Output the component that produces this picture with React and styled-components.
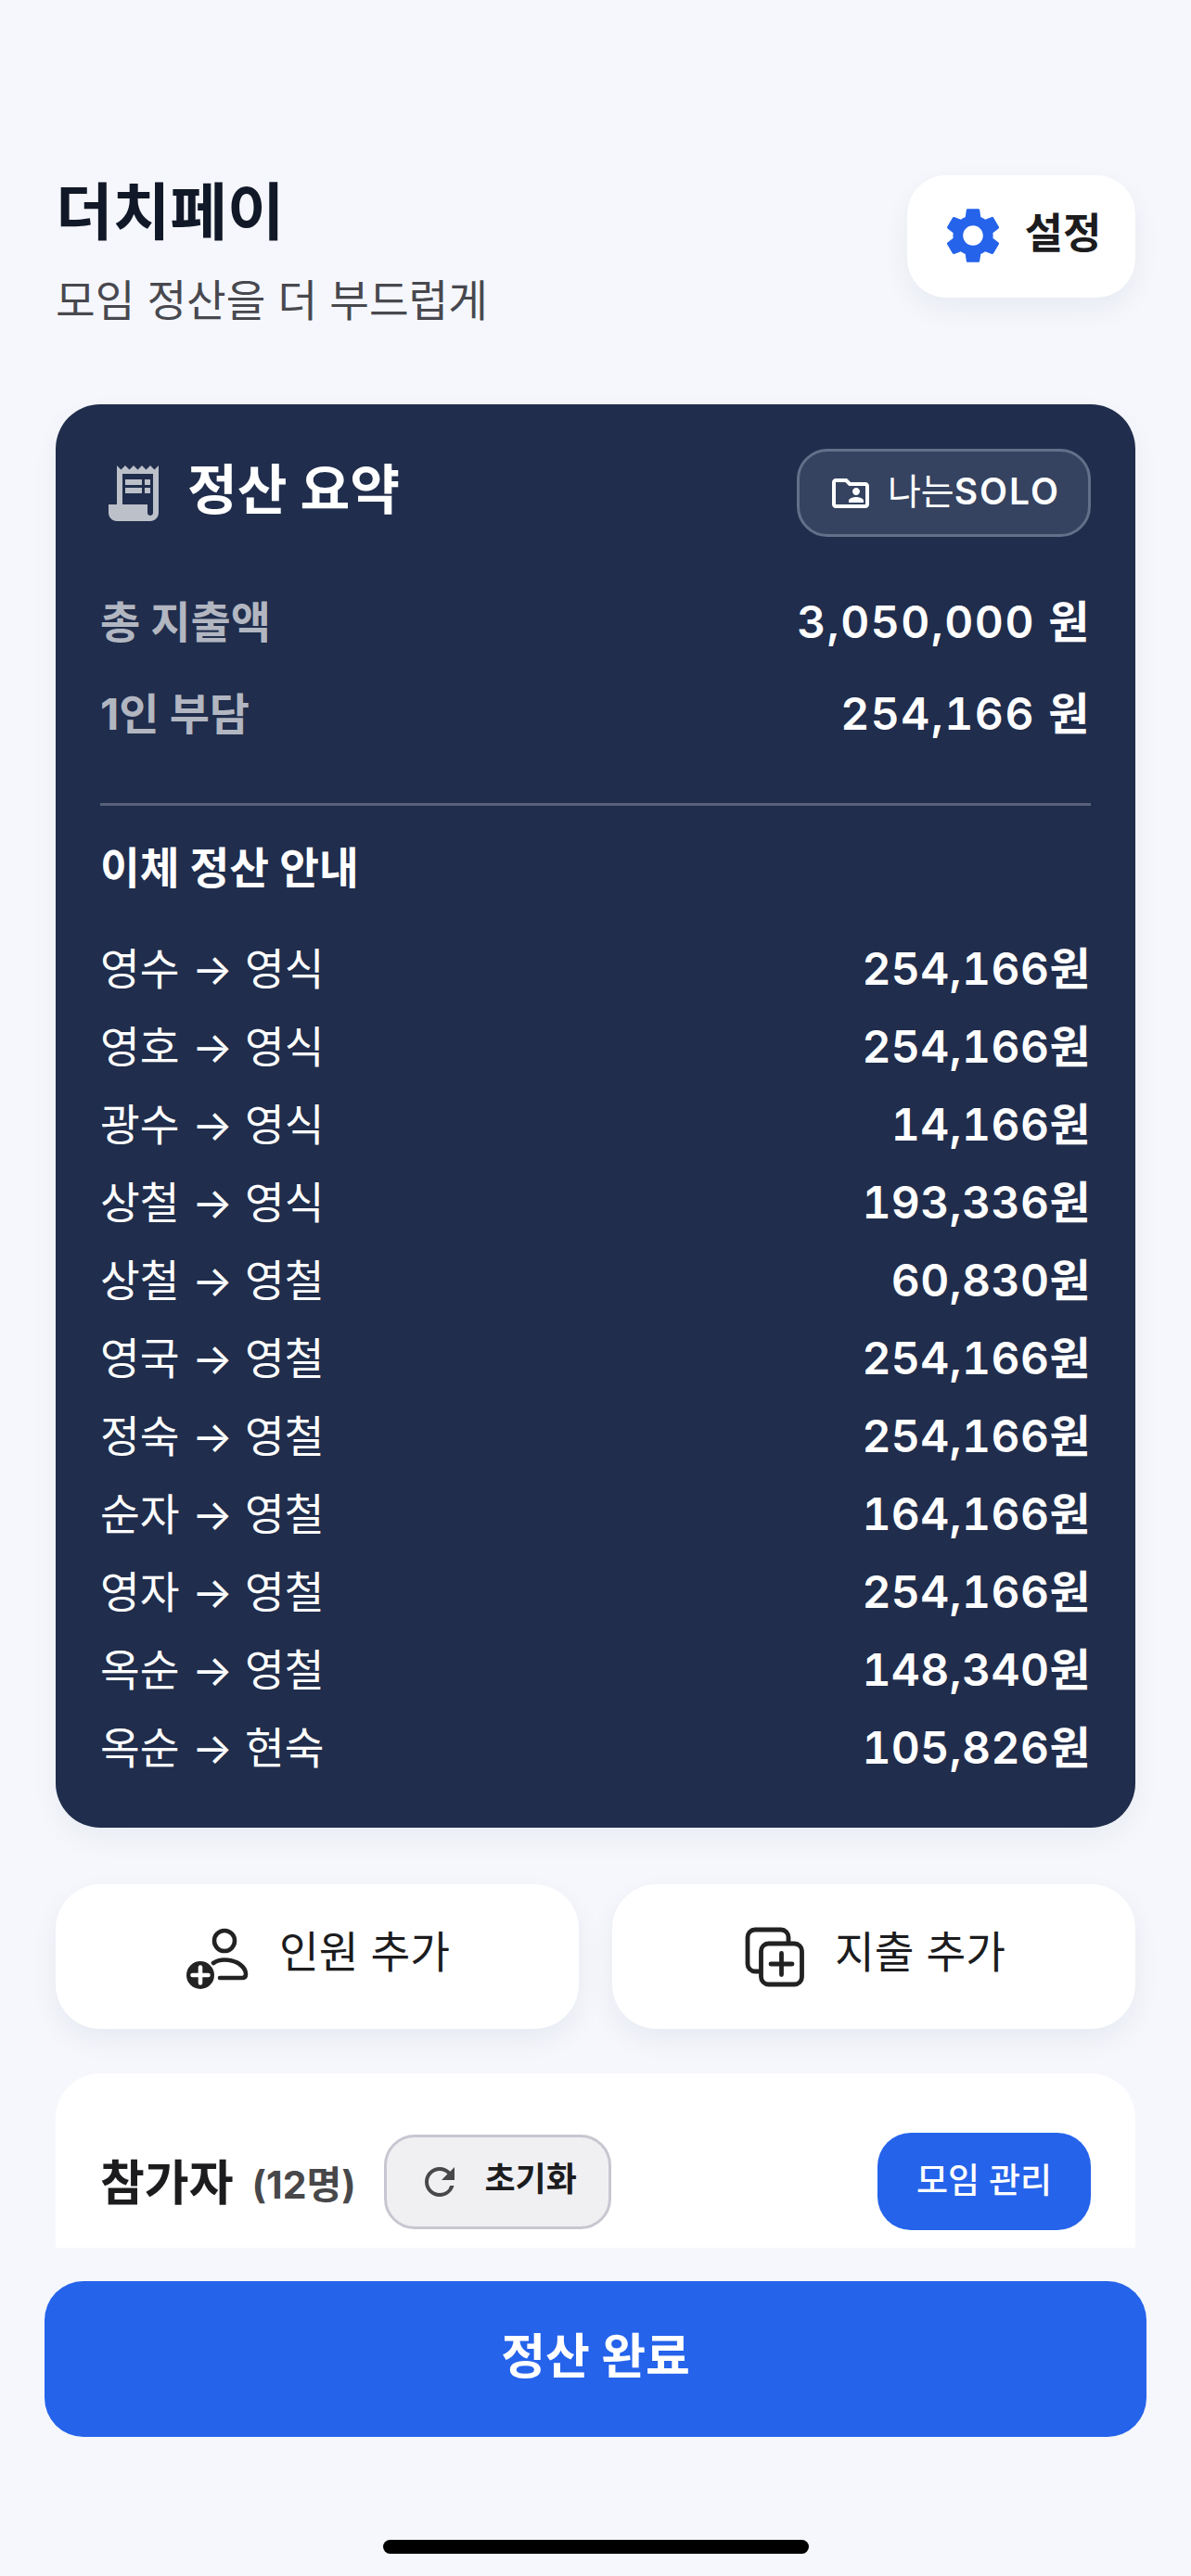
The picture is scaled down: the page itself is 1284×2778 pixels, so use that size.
import styled, { createGlobalStyle } from 'styled-components';
import { MdSettings, MdReceiptLong, MdOutlineFolderShared, MdRefresh } from 'react-icons/md';

const transfers = [
  ['영수', '영식', '254,166'],
  ['영호', '영식', '254,166'],
  ['광수', '영식', '14,166'],
  ['상철', '영식', '193,336'],
  ['상철', '영철', '60,830'],
  ['영국', '영철', '254,166'],
  ['정숙', '영철', '254,166'],
  ['순자', '영철', '164,166'],
  ['영자', '영철', '254,166'],
  ['옥순', '영철', '148,340'],
  ['옥순', '현숙', '105,826'],
];

const GlobalStyle = createGlobalStyle`
  html, body {
    margin: 0;
    padding: 0;
    background: #f5f7fc;
  }
  body {
    font-family: Inter, "Noto Sans CJK KR", sans-serif;
    color: #1c1c1e;
  }
  * {
    box-sizing: border-box;
  }
`;

const Screen = styled.div`
  width: 1284px;
  height: 2778px;
  overflow: hidden;
  display: flex;
  flex-direction: column;
  background: #f5f7fc;
`;

const Scroll = styled.div`
  height: 2424px;
  flex: none;
  overflow: hidden;
  padding: 189px 60px 0;
`;

const Header = styled.header`
  display: flex;
  justify-content: space-between;
  align-items: flex-start;
`;

const Title = styled.h1`
  margin: 0;
  font-size: 67px;
  line-height: 80px;
  font-weight: 700;
  color: #111827;
`;

const Subtitle = styled.p`
  margin: 23px 0 0;
  font-size: 46.4px;
  line-height: 64px;
  font-weight: 400;
  color: #48484f;
`;

// text sits low in the line box next to icons, this lifts it a little
const Label = styled.span`
  display: block;
  line-height: 1;
  padding-bottom: ${(p) => p.$lift || 10}px;
`;

const SettingsButton = styled.button`
  width: 246px;
  height: 132px;
  border: 0;
  border-radius: 42px;
  background: #fff;
  box-shadow: 0 12px 30px rgba(20, 30, 60, 0.06);
  display: flex;
  align-items: center;
  justify-content: center;
  gap: 20px;
  font: 700 45px Inter, "Noto Sans CJK KR", sans-serif;
  color: #1c1c1e;
  padding: 0 2px 2px 0;

  svg {
    color: #2563eb;
    font-size: 72px;
  }
`;

const SummaryCard = styled.section`
  margin-top: 80px;
  height: 1535px;
  border-radius: 48px;
  background: #202d4c;
  box-shadow: 0 12px 30px rgba(20, 30, 60, 0.05);
  padding: 48px 48px 44px;
  color: #fff;
`;

const SummaryHead = styled.div`
  display: flex;
  justify-content: space-between;
  align-items: center;
`;

const SummaryTitle = styled.h2`
  margin: 0;
  display: flex;
  align-items: center;
  gap: 22px;
  font-size: 58.5px;
  font-weight: 700;

  svg {
    font-size: 72px;
    color: rgba(255, 255, 255, 0.7);
  }
`;

const GroupChip = styled.div`
  height: 95px;
  padding: 0 30px 0 31px;
  border: 3px solid #64708a;
  border-radius: 33px;
  background: #354360;
  display: flex;
  align-items: center;
  gap: 16px;
  font-size: 39px;
  font-weight: 400;

  svg {
    font-size: 48px;
  }
`;

const ChipLatin = styled.span`
  font-weight: 600;
  letter-spacing: 2px;
`;

const Totals = styled.div`
  margin-top: 58px;
  display: flex;
  flex-direction: column;
  gap: 39px;
  padding-bottom: 70px;
  border-bottom: 3px solid rgba(255, 255, 255, 0.25);
`;

const TotalRow = styled.div`
  height: 60px;
  display: flex;
  justify-content: space-between;
  align-items: center;
`;

const TotalLabel = styled.span`
  font-size: 47px;
  font-weight: 700;
  color: rgba(255, 255, 255, 0.66);
`;

const TotalValue = styled.span`
  font-size: 48px;
  font-weight: 600;
  letter-spacing: 1.5px;
  font-variant-numeric: tabular-nums;
`;

const GuideTitle = styled.h3`
  margin: 37px 0 33px;
  font-size: 46.5px;
  line-height: 60px;
  font-weight: 700;
`;

const TransferRow = styled.div`
  height: 84px;
  display: flex;
  justify-content: space-between;
  align-items: center;
`;

const TransferName = styled.span`
  font-size: 46.5px;
  font-weight: 400;
`;

const TransferAmount = styled.span`
  font-size: 48px;
  font-weight: 600;
  letter-spacing: 0.4px;
  font-variant-numeric: tabular-nums;
`;

const ActionRow = styled.div`
  margin-top: 61px;
  display: grid;
  grid-template-columns: 564px 564px;
  gap: 36px;
`;

const ActionButton = styled.button`
  height: 156px;
  border: 0;
  border-radius: 48px;
  background: #fff;
  box-shadow: 0 12px 30px rgba(20, 30, 60, 0.06);
  display: flex;
  align-items: center;
  justify-content: center;
  gap: 30px;
  padding: 0;
  font: 400 46.5px Inter, "Noto Sans CJK KR", sans-serif;
  color: #1c1c1e;
`;

const ParticipantCard = styled.section`
  margin-top: 48px;
  height: 400px;
  border-radius: 48px;
  background: #fff;
  padding: 64px 48px;
`;

const ParticipantHead = styled.div`
  display: flex;
  align-items: center;
`;

const ParticipantTitle = styled.h2`
  margin: 0 0 4px;
  font-size: 52px;
  font-weight: 700;
  color: #1c1c1e;
`;

const ParticipantCount = styled.span`
  margin-left: 20px;
  font-size: 41px;
  font-weight: 700;
  color: #48484a;
`;

const ResetButton = styled.button`
  margin-left: 30px;
  width: 245px;
  height: 102px;
  border: 3px solid #c7c7d1;
  border-radius: 33px;
  background: #f0f0f3;
  display: flex;
  align-items: center;
  justify-content: center;
  gap: 24px;
  padding: 0;
  font: 700 36px Inter, "Noto Sans CJK KR", sans-serif;
  color: #1c1c1e;

  svg {
    font-size: 48px;
    color: #48484a;
  }
`;

const ManageButton = styled.button`
  margin-left: auto;
  width: 230px;
  height: 105px;
  border: 0;
  border-radius: 36px;
  background: #2563eb;
  padding: 0 0 8px;
  font: 500 37px Inter, "Noto Sans CJK KR", sans-serif;
  color: #fff;
`;

const Footer = styled.div`
  padding: 36px 48px 0;
  display: flex;
  flex-direction: column;
  align-items: center;
`;

const DoneButton = styled.button`
  width: 100%;
  height: 168px;
  border: 0;
  border-radius: 42px;
  background: #2563eb;
  padding: 0 0 14px;
  font: 700 52px Inter, "Noto Sans CJK KR", sans-serif;
  color: #fff;
`;

const HomeBar = styled.div`
  margin-top: 111px;
  width: 459px;
  height: 15px;
  border-radius: 8px;
  background: #000;
`;

const Arrow = styled.span`
  font-family: Inter, sans-serif;
`;

function PersonAddIcon() {
  return (
    <svg width="72" height="72" viewBox="0 0 72 72" fill="none" stroke="#222" strokeWidth="4.6" strokeLinecap="round" strokeLinejoin="round">
      <circle cx="43" cy="19" r="11" />
      <path d="M31 43 Q36 39.5 43 39.5 C56 39.5 66 47 66 55 Q66 59 62 59 H38" />
      <circle cx="17" cy="56" r="15" fill="#222" stroke="none" />
      <path d="M8.5 56 H25.5 M17 47.5 V64.5" stroke="#fff" />
    </svg>
  );
}

function CopyPlusIcon() {
  return (
    <svg width="70" height="70" viewBox="0 0 70 70" fill="none" stroke="#222" strokeWidth="4.8" strokeLinecap="round" strokeLinejoin="round">
      <path d="M19 51 H14 a8 8 0 0 1 -8 -8 V14 a8 8 0 0 1 8 -8 H42 a8 8 0 0 1 8 8 V19" />
      <rect x="20.5" y="21" width="44" height="44" rx="8" />
      <path d="M31 43 H54 M42.5 31.5 V54.5" />
    </svg>
  );
}

export default function App() {
  return (
    <Screen>
      <GlobalStyle />
      <Scroll>
        <Header>
          <div>
            <Title>더치페이</Title>
            <Subtitle>모임 정산을 더 부드럽게</Subtitle>
          </div>
          <SettingsButton>
            <MdSettings />
            <Label $lift={6}>설정</Label>
          </SettingsButton>
        </Header>

        <SummaryCard>
          <SummaryHead>
            <SummaryTitle>
              <MdReceiptLong />
              <Label $lift={6}>정산 요약</Label>
            </SummaryTitle>
            <GroupChip>
              <MdOutlineFolderShared />
              <Label $lift={4}>나는<ChipLatin>SOLO</ChipLatin></Label>
            </GroupChip>
          </SummaryHead>
          <Totals>
            <TotalRow>
              <TotalLabel>총 지출액</TotalLabel>
              <TotalValue>3,050,000 원</TotalValue>
            </TotalRow>
            <TotalRow>
              <TotalLabel>1인 부담</TotalLabel>
              <TotalValue>254,166 원</TotalValue>
            </TotalRow>
          </Totals>
          <GuideTitle>이체 정산 안내</GuideTitle>
          {transfers.map(([from, to, amount], i) => (
            <TransferRow key={i}>
              <TransferName>
                {from} <Arrow>→</Arrow> {to}
              </TransferName>
              <TransferAmount>{amount}원</TransferAmount>
            </TransferRow>
          ))}
        </SummaryCard>

        <ActionRow>
          <ActionButton>
            <PersonAddIcon />
            <Label>인원 추가</Label>
          </ActionButton>
          <ActionButton>
            <CopyPlusIcon />
            <Label>지출 추가</Label>
          </ActionButton>
        </ActionRow>

        <ParticipantCard>
          <ParticipantHead>
            <ParticipantTitle>참가자</ParticipantTitle>
            <ParticipantCount>(12명)</ParticipantCount>
            <ResetButton>
              <MdRefresh />
              <Label $lift={6}>초기화</Label>
            </ResetButton>
            <ManageButton>모임 관리</ManageButton>
          </ParticipantHead>
        </ParticipantCard>
      </Scroll>

      <Footer>
        <DoneButton>정산 완료</DoneButton>
        <HomeBar />
      </Footer>
    </Screen>
  );
}
